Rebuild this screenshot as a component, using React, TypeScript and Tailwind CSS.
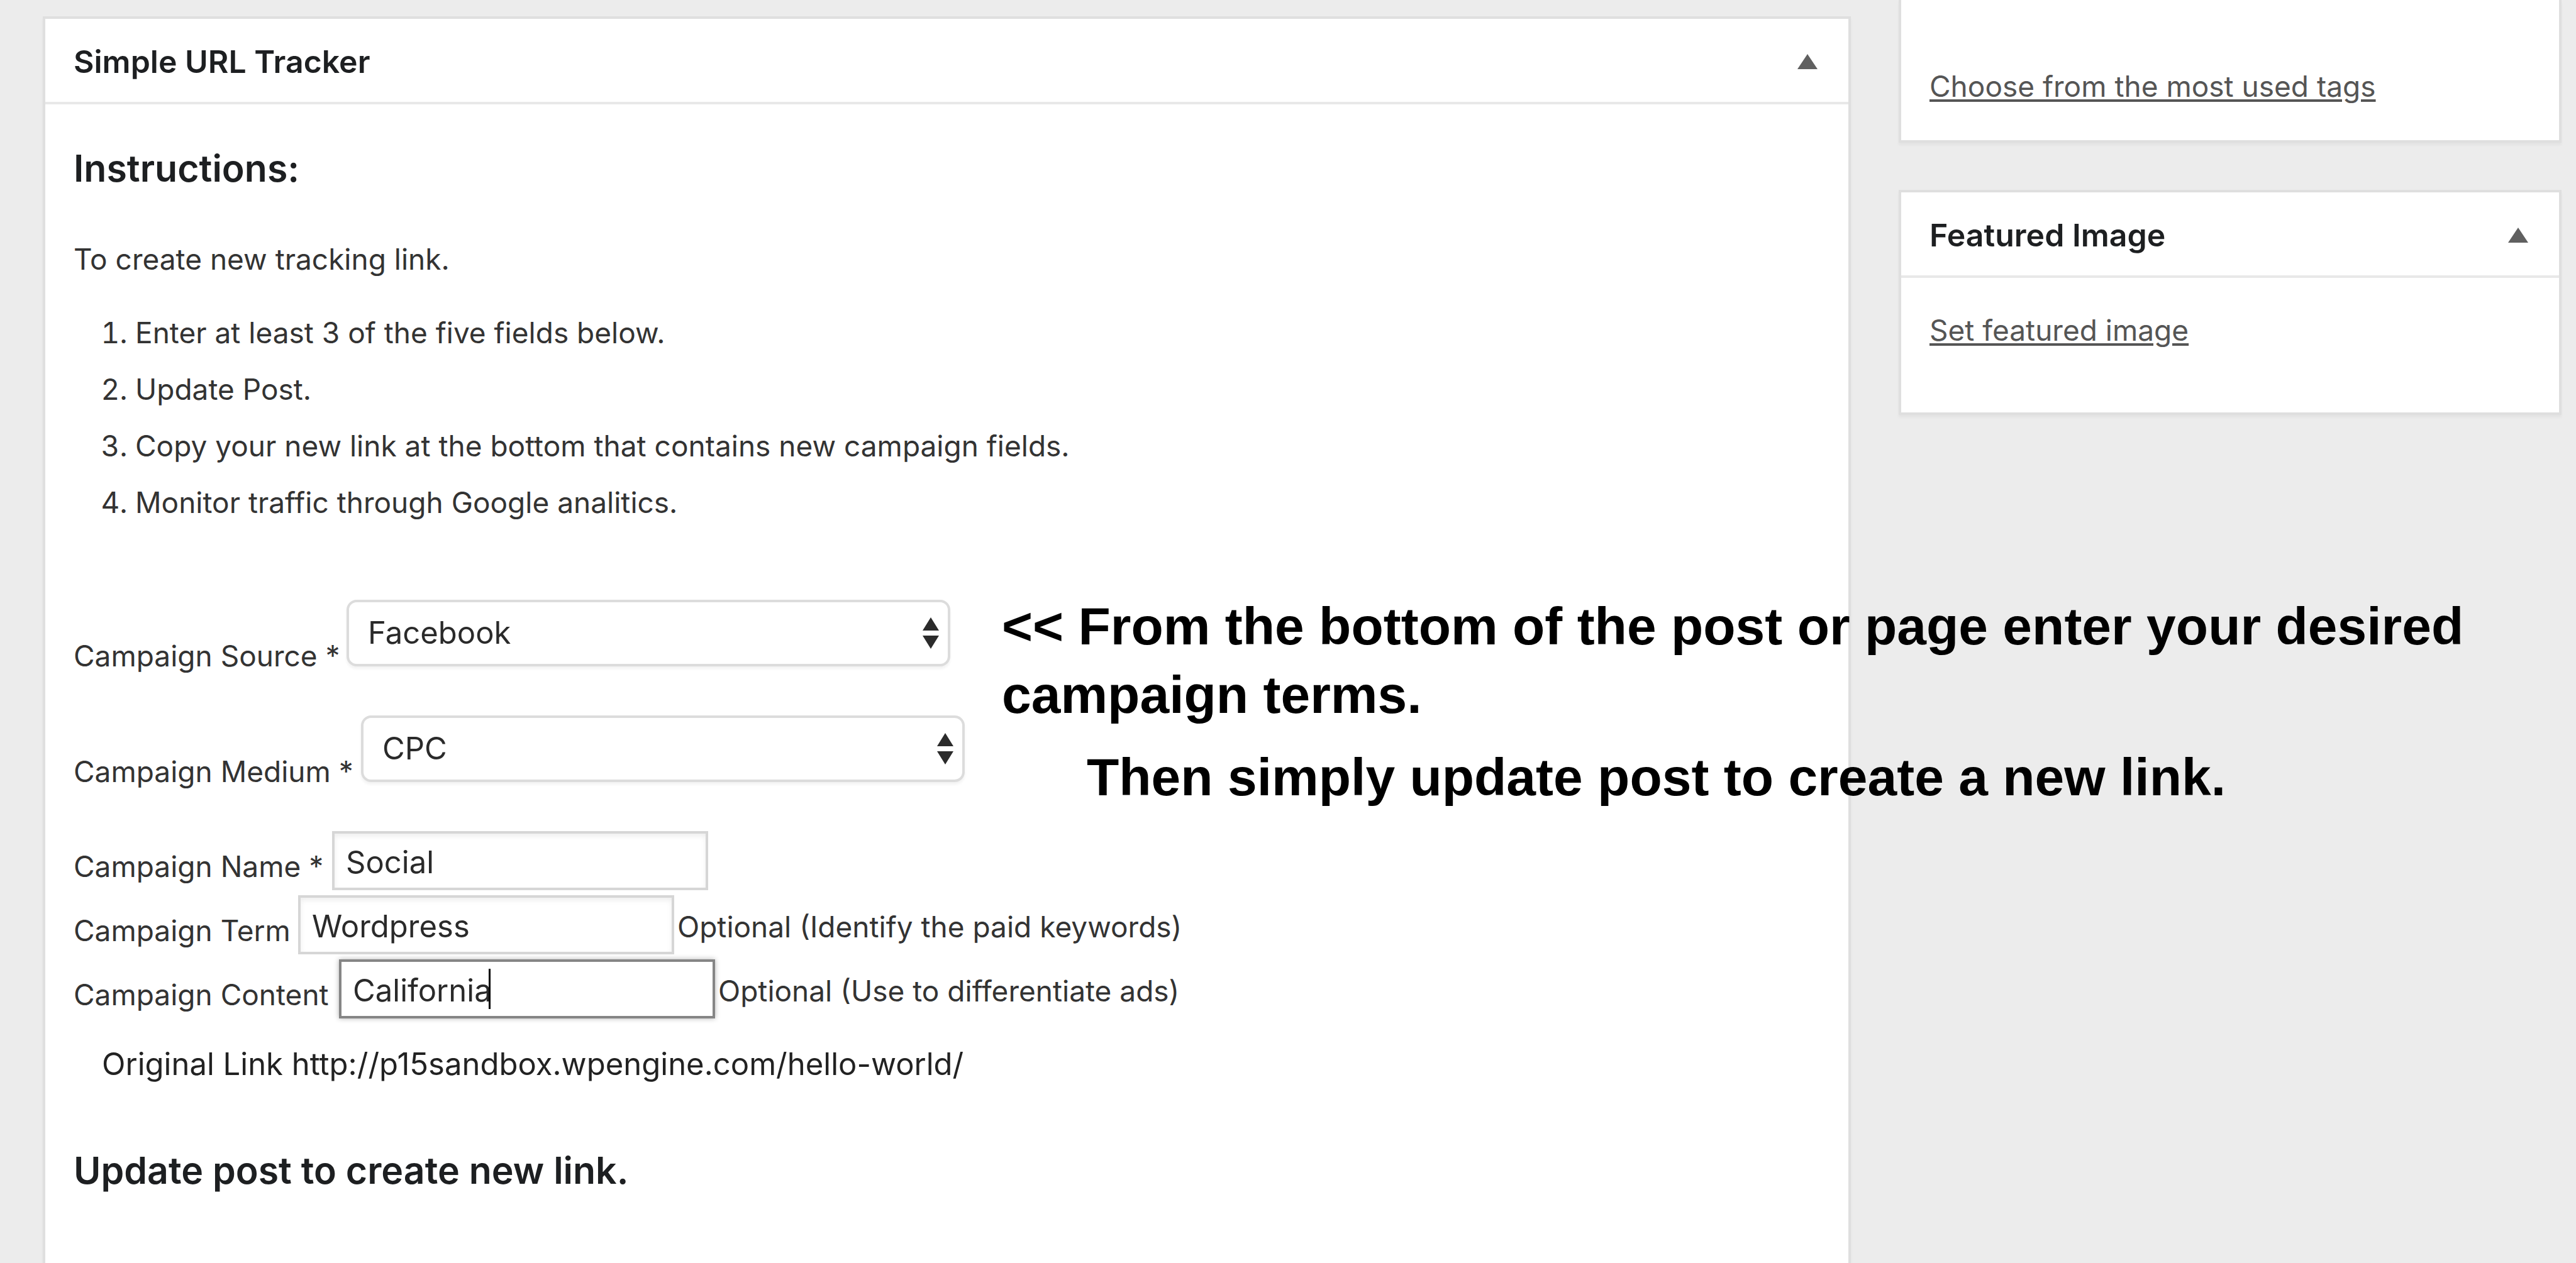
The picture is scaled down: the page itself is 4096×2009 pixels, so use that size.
import type { ReactNode } from "react";

const panel = "border-4 border-[#dfdfdf] bg-white shadow-[0_4px_4px_rgba(0,0,0,0.04)]";

function ToggleButton({ label }: { label: string }) {
  return (
    <button type="button" aria-label={label} className="flex h-12 w-12 items-center justify-center">
      <svg width="32" height="24" viewBox="0 0 32 24" fill="#606060">
        <path d="M16 0L32 24H0z" />
      </svg>
    </button>
  );
}

function PanelHeader({ title }: { title: string }) {
  return (
    <header className="flex h-[136px] items-center justify-between border-b-4 border-[#e8e8e8] pt-1 pr-[41px] pl-[45px]">
      <h2 className="text-[50px] leading-[72px] font-semibold text-[#1d1f21]">{title}</h2>
      <ToggleButton label={`Toggle panel: ${title}`} />
    </header>
  );
}

function Label({ id, className, children }: { id: string; className: string; children: ReactNode }) {
  return (
    <label htmlFor={id} className={`shrink-0 self-end whitespace-nowrap ${className}`}>
      {children}
    </label>
  );
}

function SelectBox({ id, options }: { id: string; options: string[] }) {
  return (
    <div className="relative w-[960px]">
      <select
        id={id}
        defaultValue={options[0]}
        className="block h-[106px] w-full appearance-none rounded-2xl border-4 border-[#dcdcdc] bg-white pr-20 pl-[30px] text-[49px] text-[#2a2a2a] shadow-[0_4px_4px_rgba(0,0,0,0.05)]"
      >
        {options.map((o) => (
          <option key={o}>{o}</option>
        ))}
      </select>
      <svg
        className="pointer-events-none absolute top-7 right-[18px]"
        width="26"
        height="50"
        viewBox="0 0 26 50"
        fill="#2b2b2b"
      >
        <path d="M13 0L26 21H0zM13 50L26 29H0z" />
      </svg>
    </div>
  );
}

const inputBase = "block h-[94px] w-[598px] border-4 bg-white pt-1 pl-[18px] text-[49px] text-[#2a2a2a] outline-none";

export default function App() {
  return (
    <div className="flex min-h-screen items-stretch gap-[76px] overflow-hidden bg-[#ececec] pr-[23px] pl-[68px] font-['Inter',sans-serif] text-[46px] leading-[72px] text-[#333]">
      <main className="relative flex grow flex-col pt-[26px]">
        <section className={`grow border-b-0 ${panel}`}>
          <PanelHeader title="Simple URL Tracker" />
          <div className="px-[45px] pt-[57px]">
            <h3 className="text-[59px] leading-[90px] font-semibold text-[#1d1f21]">Instructions:</h3>
            <p className="mt-[63px]">To create new tracking link.</p>
            <ol className="mt-[36px] list-decimal pl-[98px] leading-[90px]">
              <li>Enter at least 3 of the five fields below.</li>
              <li>Update Post.</li>
              <li>Copy your new link at the bottom that contains new campaign fields.</li>
              <li>Monitor traffic through Google analitics.</li>
            </ol>
            <form className="mt-[110px]">
              <div className="flex h-[125px]">
                <Label id="source" className="w-[434px]">Campaign Source *</Label>
                <SelectBox id="source" options={["Facebook", "Twitter", "Google"]} />
              </div>
              <div className="mt-[59px] flex h-[125px]">
                <Label id="medium" className="w-[457px]">Campaign Medium *</Label>
                <SelectBox id="medium" options={["CPC", "Email", "Banner"]} />
              </div>
              <div className="mt-[59px] flex flex-col gap-2">
                <div className="flex">
                  <Label id="name" className="w-[411px] pb-0.5">Campaign Name *</Label>
                  <input id="name" type="text" defaultValue="Social" className={`${inputBase} border-[#d6d6d6] shadow-[inset_0_4px_8px_rgba(0,0,0,0.07)]`} />
                </div>
                <div className="flex">
                  <Label id="term" className="w-[357px] pb-0.5">Campaign Term</Label>
                  <input id="term" type="text" defaultValue="Wordpress" className={`${inputBase} border-[#d6d6d6] shadow-[inset_0_4px_8px_rgba(0,0,0,0.07)]`} />
                  <span className="self-end pb-2 pl-[5px] whitespace-nowrap">Optional (Identify the paid keywords)</span>
                </div>
                <div className="flex">
                  <Label id="content" className="w-[422px] pb-0.5">Campaign Content</Label>
                  <div className="relative">
                    <input id="content" type="text" defaultValue="California" className={`${inputBase} border-[#858585] shadow-[0_0_8px_rgba(0,0,0,0.3)]`} />
                    <span className="absolute top-[15px] left-[238px] h-16 w-[3px] bg-black" />
                  </div>
                  <span className="self-end pb-2 pl-[5px] whitespace-nowrap">Optional (Use to differentiate ads)</span>
                </div>
              </div>
            </form>
            <p className="mt-[37px] pl-[45px] text-[49px] text-[#222]">Original Link http://p15sandbox.wpengine.com/hello-world/</p>
            <h3 className="mt-[88px] text-[59px] leading-[90px] font-semibold text-[#1d1f21]">Update post to create new link.</h3>
          </div>
        </section>
        <aside className="absolute top-[942px] left-[1525px] w-[2400px] font-['Liberation_Sans',Arial,sans-serif] text-[84px] leading-[109px] font-bold text-black">
          <p>
            &lt;&lt; From the bottom of the post or page enter your desired
            <br />
            campaign terms.
          </p>
          <p className="mt-[22px] pl-[135px]">Then simply update post to create a new link.</p>
        </aside>
      </main>
      <aside className="flex w-[1054px] shrink-0 flex-col gap-[75px]">
        <section className={`border-t-0 pt-[101px] pb-[50px] pl-[45px] ${panel}`}>
          <a href="#tags" className="text-[#555] underline decoration-4 underline-offset-4">Choose from the most used tags</a>
        </section>
        <section className={panel}>
          <PanelHeader title="Featured Image" />
          <div className="pt-[47px] pb-[95px] pl-[45px]">
            <a href="#featured" className="text-[#555] underline decoration-4 underline-offset-4">Set featured image</a>
          </div>
        </section>
      </aside>
    </div>
  );
}
